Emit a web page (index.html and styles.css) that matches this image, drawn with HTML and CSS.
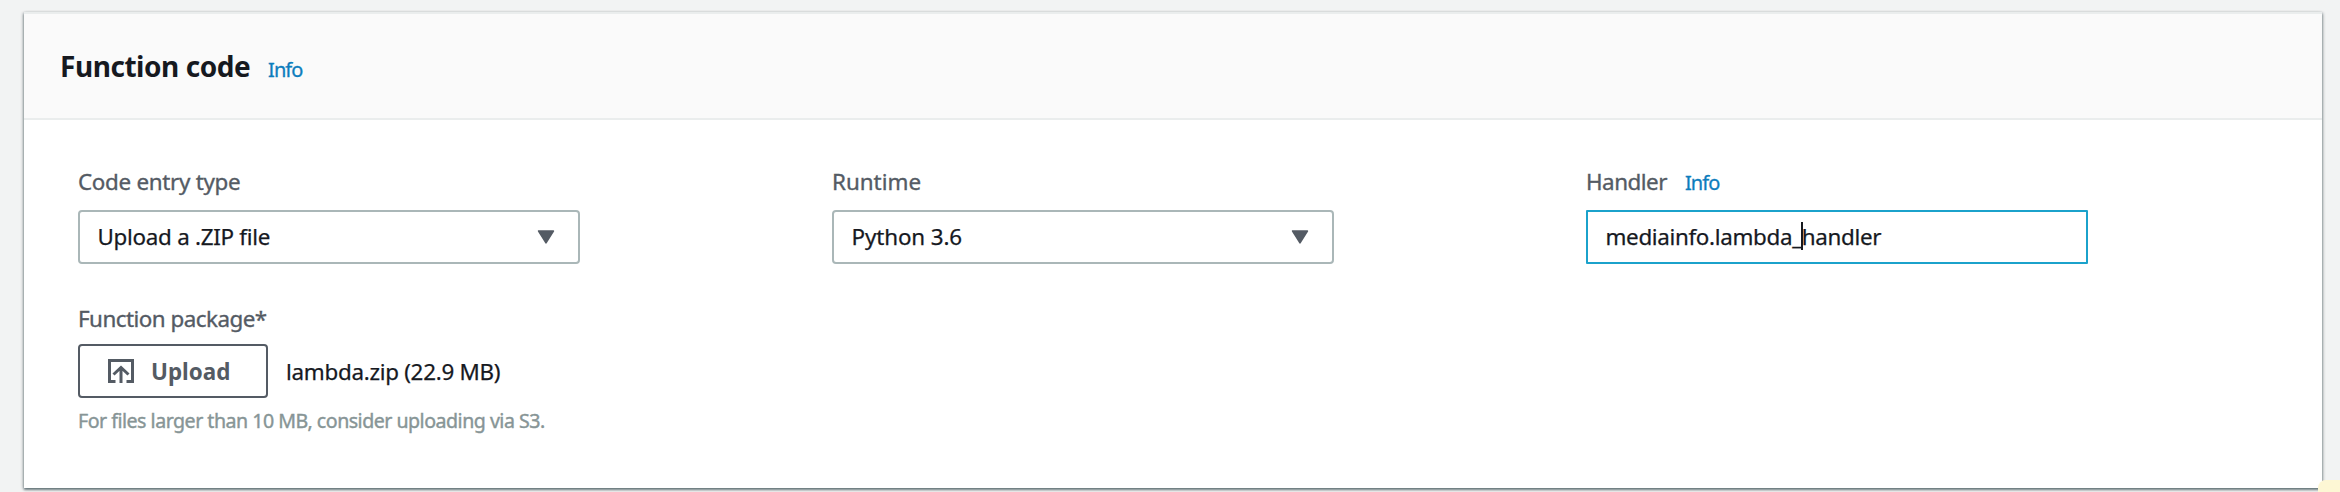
FILE: index.html
```html
<!DOCTYPE html>
<html lang="en">
<head>
<meta charset="utf-8">
<title>Function code</title>
<link rel="stylesheet" href="styles.css">
</head>
<body>
<section class="panel">
  <header class="panel-header">
    <h2 class="title">Function code</h2>
    <a class="info">Info</a>
  </header>
  <div class="panel-body">
    <div class="row">
      <div class="field">
        <div class="label"><span class="t-entry">Code entry type</span></div>
        <div class="control"><span class="t-zip">Upload a .ZIP file</span>
          <svg class="arrow" width="18" height="14" viewBox="0 0 18 14"><path d="M1.6 1h14.8L9 12.8z" fill="#545b64" stroke="#545b64" stroke-width="1.6" stroke-linejoin="round"/></svg>
        </div>
      </div>
      <div class="field">
        <div class="label"><span class="t-runtime">Runtime</span></div>
        <div class="control"><span class="t-python">Python 3.6</span>
          <svg class="arrow" width="18" height="14" viewBox="0 0 18 14"><path d="M1.6 1h14.8L9 12.8z" fill="#545b64" stroke="#545b64" stroke-width="1.6" stroke-linejoin="round"/></svg>
        </div>
      </div>
      <div class="field">
        <div class="label"><span class="t-handler">Handler</span><a class="info">Info</a></div>
        <div class="control focused"><span class="t-value">mediainfo.lambda_</span><span class="caret"></span><span class="t-value">handler</span></div>
      </div>
    </div>
    <div class="label package-label"><span class="t-package">Function package*</span></div>
    <div class="upload-row">
      <div class="button">
        <svg width="26" height="24" viewBox="0 0 26 24" fill="none" stroke="#545b64" stroke-width="3"><path d="M7.5 22.5h-6v-21h23v21h-6"/><path d="M13 24V9M5.5 15.5L13 8.5l7.5 7"/></svg>
        <span class="t-upload">Upload</span>
      </div>
      <span class="t-file">lambda.zip (22.9 MB)</span>
    </div>
    <div class="hint"><span class="t-hint">For files larger than 10 MB, consider uploading via S3.</span></div>
  </div>
</section>
<div class="corner"></div>
</body>
</html>
```
FILE: styles.css
```css
* { box-sizing: border-box; }
body {
  margin: 0;
  width: 2340px;
  height: 492px;
  padding: 12px 18px 0 24px;
  overflow: hidden;
  background: #f2f3f3;
  font-family: "Noto Sans", sans-serif;
  font-size: 22.4px;
  color: #16191f;
  white-space: nowrap;
}
.panel {
  width: 2298px;
  height: 476px;
  background: #fff;
  border-top: 2px solid #eaeded;
  box-shadow: 0 2px 2px 0 rgba(0, 28, 36, .3), 1px 1px 3px 0 rgba(0, 28, 36, .3), -1px 1px 3px 0 rgba(0, 28, 36, .3);
}
.panel-header {
  display: flex;
  align-items: baseline;
  height: 106px;
  padding: 32px 36px 0;
  background: #fafafa;
  border-bottom: 2px solid #eaeded;
}
.title { margin: 0; width: 208px; font-size: 28px; line-height: 40px; font-weight: 700; letter-spacing: -.45px; }
.info { font-size: 20px; color: #0d7dbd; letter-spacing: -.9px; -webkit-text-stroke: .3px; }
.panel-body { padding: 48px 54px 0; }
.row { display: grid; grid-template-columns: repeat(3, 502px); column-gap: 252px; }
.label { display: flex; align-items: baseline; height: 42px; line-height: 28px; color: #545b64; -webkit-text-stroke: .35px; }
.label .info { margin-left: 18px; }
.control {
  display: flex;
  align-items: center;
  height: 54px;
  padding: 0 23px 2px 17.5px;
  border: 2px solid #aab7b8;
  border-radius: 4px;
  -webkit-text-stroke: .25px;
}
.arrow { margin-left: auto; position: relative; top: 1px; }
.focused { border-color: #1ba2cb; border-radius: 1px; }
.caret { width: 2px; height: 28px; margin: 0 -1px; background: #16191f; }
.t-entry { letter-spacing: -.3px; }
.t-zip { letter-spacing: -.28px; }
.t-python { letter-spacing: -.12px; }
.t-handler { letter-spacing: -.5px; }
.t-value { letter-spacing: -.33px; }
.t-package { letter-spacing: -.52px; }
.t-file { letter-spacing: -.28px; -webkit-text-stroke: .25px; }
.t-hint { letter-spacing: -.5px; }
.package-label { margin-top: 41px; height: 39px; }
.upload-row { display: flex; align-items: center; height: 54px; }
.button {
  display: flex;
  align-items: center;
  width: 190px;
  height: 54px;
  margin-right: 18px;
  padding-left: 28px;
  border: 2px solid #545b64;
  border-radius: 4px;
  color: #545b64;
  font-weight: 700;
}
.button span { margin-left: 17px; }
.hint { margin-top: 8px; font-size: 19.6px; line-height: 30px; color: #879596; -webkit-text-stroke: .4px; }
.corner {
  position: absolute;
  left: 2318px;
  top: 480px;
  width: 22px;
  height: 12px;
  background: #fdf7d4;
  border-top-left-radius: 8px;
}
```
